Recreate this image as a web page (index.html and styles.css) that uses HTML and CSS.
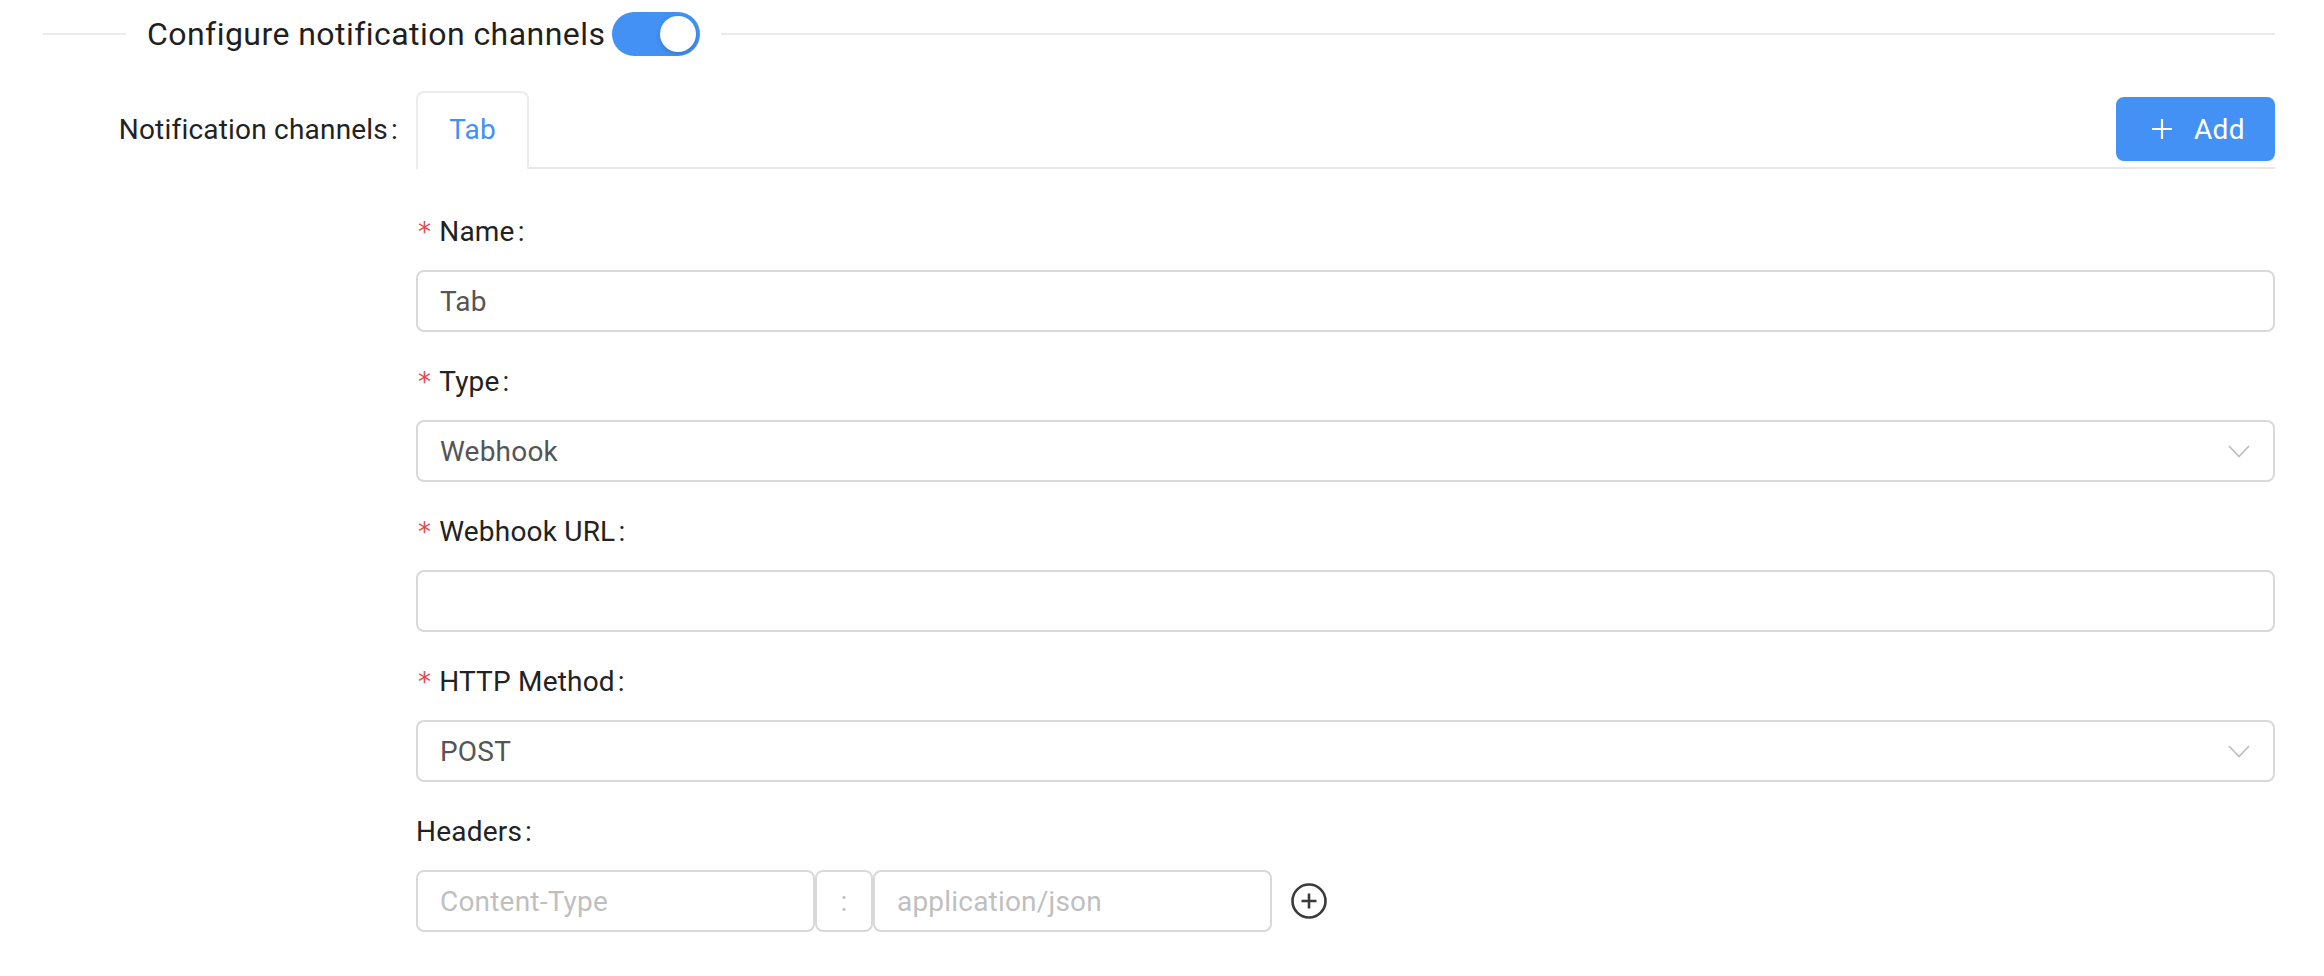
FILE: index.html
```html
<!DOCTYPE html>
<html lang="en">
<head>
<meta charset="utf-8">
<title>Configure notification channels</title>
<link rel="stylesheet" href="styles.css">
</head>
<body>
<div class="page">
  <div class="divider">
    <span class="divider-line short"></span>
    <span class="divider-title">Configure notification channels</span>
    <span class="switch"><span class="knob"></span></span>
    <span class="divider-line grow"></span>
  </div>

  <div class="channels">
    <div class="row-label">Notification channels<span class="colon">:</span></div>
    <div class="row-control">
      <div class="tabs">
        <div class="tab active">Tab</div>
        <button class="btn-add" type="button">
          <svg class="btn-icon" viewBox="0 0 22 22" width="22" height="22" aria-hidden="true"><path d="M11 1v20M1 11h20" stroke="#fff" stroke-width="2.2" fill="none"/></svg>
          <span>Add</span>
        </button>
      </div>

      <div class="pane">
        <div class="item">
          <div class="item-label"><span class="req">*</span>Name<span class="colon">:</span></div>
          <div class="field"><span class="value">Tab</span></div>
        </div>
        <div class="item">
          <div class="item-label"><span class="req">*</span>Type<span class="colon">:</span></div>
          <div class="field select"><span class="value">Webhook</span>
            <svg class="chevron" viewBox="0 0 22 13" width="22" height="13" aria-hidden="true"><polyline points="1,1 11,11.5 21,1" fill="none" stroke="#bfbfbf" stroke-width="1.8"/></svg>
          </div>
        </div>
        <div class="item">
          <div class="item-label"><span class="req">*</span>Webhook URL<span class="colon">:</span></div>
          <div class="field"><span class="value"></span></div>
        </div>
        <div class="item">
          <div class="item-label"><span class="req">*</span>HTTP Method<span class="colon">:</span></div>
          <div class="field select"><span class="value">POST</span>
            <svg class="chevron" viewBox="0 0 22 13" width="22" height="13" aria-hidden="true"><polyline points="1,1 11,11.5 21,1" fill="none" stroke="#bfbfbf" stroke-width="1.8"/></svg>
          </div>
        </div>
        <div class="item">
          <div class="item-label">Headers<span class="colon">:</span></div>
          <div class="header-row">
            <div class="field key"><span class="placeholder">Content-Type</span></div>
            <div class="field sep"><span class="placeholder">:</span></div>
            <div class="field val"><span class="placeholder">application/json</span></div>
            <svg class="add-circle" viewBox="0 0 36 36" width="36" height="36" aria-hidden="true"><circle cx="18" cy="18" r="16.5" fill="none" stroke="#3a3a3a" stroke-width="2.6"/><path d="M18 10.5v15M10.5 18h15" stroke="#3a3a3a" stroke-width="2.6" fill="none"/></svg>
          </div>
        </div>
      </div>
    </div>
  </div>
</div>
</body>
</html>
```

FILE: styles.css
```css
* { box-sizing: border-box; }
html, body { margin: 0; padding: 0; background: #fff; }
body {
  font-family: Roboto, "Liberation Sans", sans-serif;
  font-size: 28px;
  letter-spacing: 0.2px;
  color: #222;
}
.page {
  padding: 12px 49px 0 43px;
}

/* divider */
.divider {
  display: flex;
  align-items: center;
  height: 44px;
}
.divider-line {
  height: 2px;
  background: #ebebeb;
}
.divider-line.short { width: 83px; }
.divider-line.grow { flex: 1; }
.divider-title {
  font-size: 32px;
  letter-spacing: 0.45px;
  line-height: 44px;
  color: #1f1f1f;
  margin: 0 7px 0 21px;
  white-space: nowrap;
}
.switch {
  width: 88px;
  height: 44px;
  border-radius: 22px;
  background: #4391f5;
  display: flex;
  align-items: center;
  justify-content: flex-end;
  padding: 0 4px;
  margin-right: 21px;
  flex: none;
}
.knob {
  width: 36px;
  height: 36px;
  border-radius: 50%;
  background: #fff;
  box-shadow: 0 2px 4px rgba(0, 35, 11, 0.2);
}

/* channels row */
.channels {
  display: grid;
  grid-template-columns: 373px 1fr;
  margin-top: 35px;
}
.row-label {
  height: 78px;
  display: flex;
  align-items: center;
  justify-content: flex-end;
  padding-right: 18px;
  line-height: 44px;
  white-space: nowrap;
}
.colon {
  margin-left: 3px;
}
.tabs {
  display: flex;
  align-items: center;
  height: 78px;
  border-bottom: 2px solid #e8e8e8;
}
.tab {
  align-self: stretch;
  width: 113px;
  height: 78px;
  margin-bottom: -2px;
  position: relative;
  z-index: 1;
  background: #fff;
  border: 2px solid #ececec;
  border-bottom: none;
  border-radius: 8px 8px 0 0;
  display: flex;
  align-items: center;
  justify-content: center;
  line-height: 44px;
  padding-bottom: 2px;
}
.tab.active { color: #4391f5; }
.btn-add {
  margin-left: auto;
  width: 159px;
  height: 64px;
  border: none;
  border-radius: 8px;
  background: #4391f5;
  color: #fff;
  font-family: inherit;
  font-size: 28px;
  letter-spacing: 0.3px;
  display: flex;
  align-items: center;
  padding: 0 0 0 35px;
  gap: 21px;
  box-shadow: 0 2px 0 rgba(0, 0, 0, 0.03);
  cursor: pointer;
}
.btn-icon { flex: none; }

/* pane */
.pane {
  padding-top: 41px;
}
.item {
  margin-bottom: 28px;
}
.item-label {
  line-height: 44px;
  padding-bottom: 16px;
  white-space: nowrap;
}
.req {
  color: #e5484d;
  margin-right: 8px;
  margin-left: 2px;
  font-family: "DejaVu Sans", sans-serif;
  font-size: 26px;
}
.field {
  height: 62px;
  border: 2px solid #d9d9d9;
  border-radius: 8px;
  display: flex;
  align-items: center;
  padding: 0 22px;
  background: #fff;
}
.value { color: #555; }
.placeholder { color: #bfbfbf; }
.select { justify-content: space-between; padding-right: 23px; }
.chevron { flex: none; }

.header-row {
  display: flex;
  align-items: center;
}
.field.key { width: 399px; }
.field.sep { width: 58px; justify-content: center; padding: 0; }
.field.val { width: 399px; }
.add-circle {
  margin-left: 19px;
  flex: none;
}
```
